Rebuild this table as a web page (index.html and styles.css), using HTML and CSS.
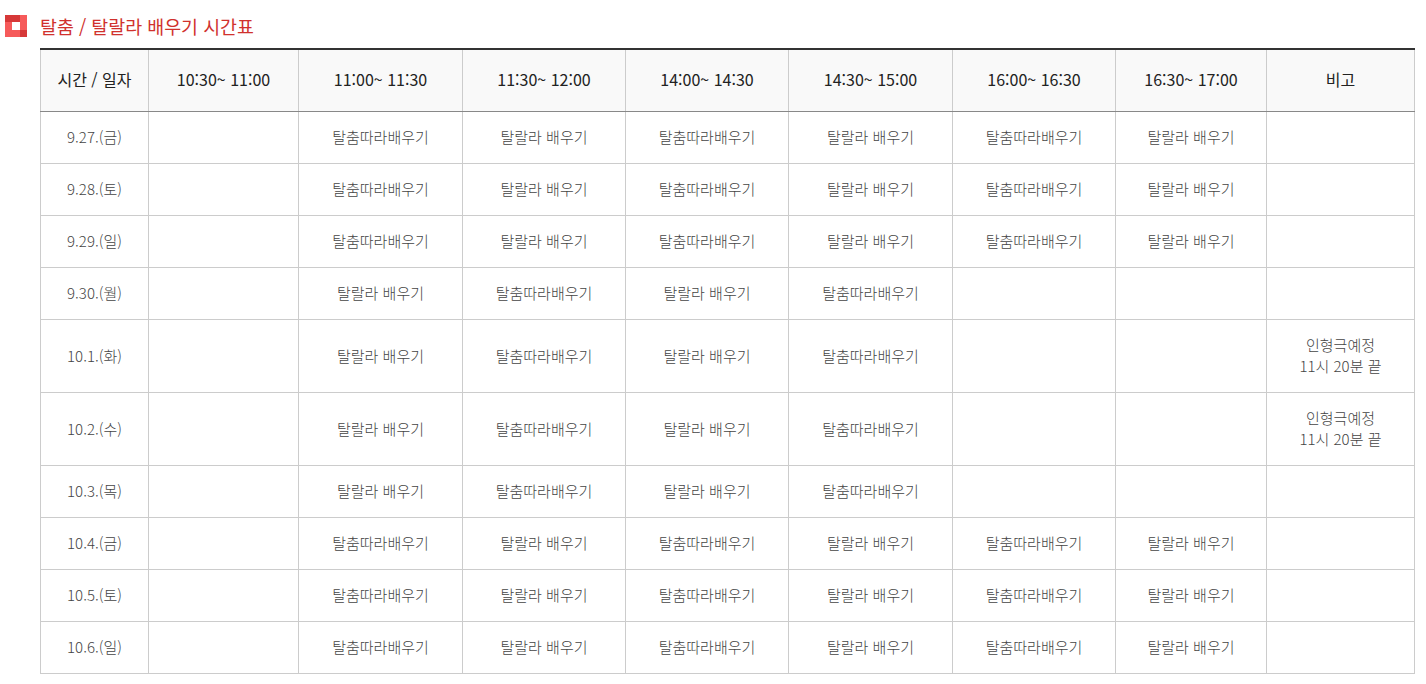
FILE: index.html
```html
<!DOCTYPE html>
<html lang="ko">
<head>
<meta charset="utf-8">
<title>탈춤 / 탈랄라 배우기 시간표</title>
<link rel="stylesheet" href="styles.css">
</head>
<body>
<h2 class="title">
  <svg class="title-icon" width="22" height="22" viewBox="0 0 22 22" aria-hidden="true">
    <rect x="0" y="0" width="22" height="22" fill="#f65a5a"/>
    <rect x="0" y="0" width="15" height="7" fill="#d63838"/>
    <rect x="15" y="15" width="7" height="7" fill="#d63838"/>
    <rect x="7" y="7" width="8" height="8" fill="#ffffff"/>
  </svg>
  <span>탈춤 / 탈랄라 배우기 시간표</span>
</h2>
<div class="wrap">
<table class="schedule">
  <colgroup>
    <col style="width:108px"><col style="width:150px"><col style="width:164px"><col style="width:163px"><col style="width:163px"><col style="width:164px"><col style="width:163px"><col style="width:151px"><col style="width:148px">
  </colgroup>
  <thead>
    <tr><th>시간 / 일자</th><th>10:30~ 11:00</th><th>11:00~ 11:30</th><th>11:30~ 12:00</th><th>14:00~ 14:30</th><th>14:30~ 15:00</th><th>16:00~ 16:30</th><th>16:30~ 17:00</th><th>비고</th></tr>
  </thead>
  <tbody>
    <tr><td>9.27.(금)</td><td></td><td>탈춤따라배우기</td><td>탈랄라 배우기</td><td>탈춤따라배우기</td><td>탈랄라 배우기</td><td>탈춤따라배우기</td><td>탈랄라 배우기</td><td></td></tr>
    <tr><td>9.28.(토)</td><td></td><td>탈춤따라배우기</td><td>탈랄라 배우기</td><td>탈춤따라배우기</td><td>탈랄라 배우기</td><td>탈춤따라배우기</td><td>탈랄라 배우기</td><td></td></tr>
    <tr><td>9.29.(일)</td><td></td><td>탈춤따라배우기</td><td>탈랄라 배우기</td><td>탈춤따라배우기</td><td>탈랄라 배우기</td><td>탈춤따라배우기</td><td>탈랄라 배우기</td><td></td></tr>
    <tr><td>9.30.(월)</td><td></td><td>탈랄라 배우기</td><td>탈춤따라배우기</td><td>탈랄라 배우기</td><td>탈춤따라배우기</td><td></td><td></td><td></td></tr>
    <tr><td>10.1.(화)</td><td></td><td>탈랄라 배우기</td><td>탈춤따라배우기</td><td>탈랄라 배우기</td><td>탈춤따라배우기</td><td></td><td></td><td>인형극예정<br>11시 20분 끝</td></tr>
    <tr><td>10.2.(수)</td><td></td><td>탈랄라 배우기</td><td>탈춤따라배우기</td><td>탈랄라 배우기</td><td>탈춤따라배우기</td><td></td><td></td><td>인형극예정<br>11시 20분 끝</td></tr>
    <tr><td>10.3.(목)</td><td></td><td>탈랄라 배우기</td><td>탈춤따라배우기</td><td>탈랄라 배우기</td><td>탈춤따라배우기</td><td></td><td></td><td></td></tr>
    <tr><td>10.4.(금)</td><td></td><td>탈춤따라배우기</td><td>탈랄라 배우기</td><td>탈춤따라배우기</td><td>탈랄라 배우기</td><td>탈춤따라배우기</td><td>탈랄라 배우기</td><td></td></tr>
    <tr><td>10.5.(토)</td><td></td><td>탈춤따라배우기</td><td>탈랄라 배우기</td><td>탈춤따라배우기</td><td>탈랄라 배우기</td><td>탈춤따라배우기</td><td>탈랄라 배우기</td><td></td></tr>
    <tr><td>10.6.(일)</td><td></td><td>탈춤따라배우기</td><td>탈랄라 배우기</td><td>탈춤따라배우기</td><td>탈랄라 배우기</td><td>탈춤따라배우기</td><td>탈랄라 배우기</td><td></td></tr>
  </tbody>
</table>
</div>
</body>
</html>
```

FILE: styles.css
```css
html, body {
  margin: 0;
  padding: 0;
  background: #ffffff;
}
body {
  font-family: "Noto Sans CJK KR", "Noto Sans", sans-serif;
  color: #444;
}
.title {
  display: flex;
  align-items: center;
  gap: 13px;
  margin: 0;
  padding: 15px 0 0 5px;
  height: 22px;
  font-size: 18.4px;
  font-weight: 400;
  color: #d0312d;
  line-height: 22px;
}
.title-icon {
  display: block;
  flex: none;
}
.wrap {
  padding: 11px 0 0 40px;
}
.schedule {
  border-collapse: collapse;
  table-layout: fixed;
  width: 1374px;
  border-top: 2px solid #333;
}
.schedule th,
.schedule td {
  border: 1px solid #cccccc;
  text-align: center;
  vertical-align: middle;
  padding: 0;
}
.schedule th {
  background: #f9f9f9;
  color: #222;
  font-size: 16px;
  font-weight: 400;
  line-height: 21px;
  padding: 19px 0 21px;
  border-top: 2px solid #333;
  border-bottom: 1px solid #888;
}
.schedule td {
  font-size: 15px;
  font-weight: 300;
  color: #444;
  line-height: 21px;
  padding: 14px 0 16px;
}
```
